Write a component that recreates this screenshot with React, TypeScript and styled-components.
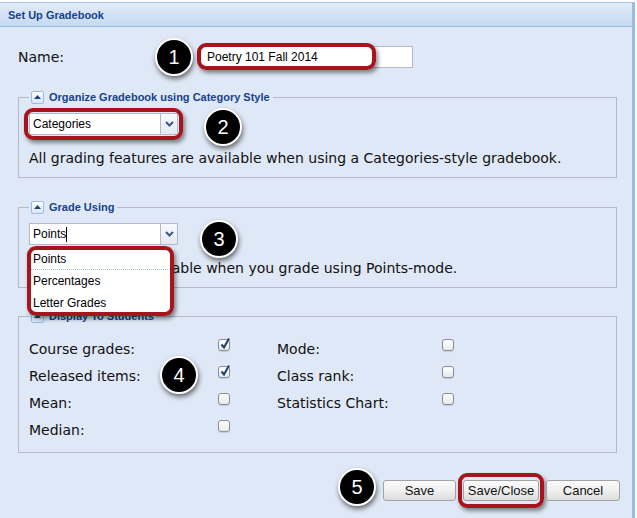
import styled, { createGlobalStyle } from 'styled-components';

const GlobalStyle = createGlobalStyle`
  html, body {
    margin: 0;
    padding: 0;
    background: #ffffff;
  }
  body {
    font-family: 'Liberation Sans', Arial, sans-serif;
  }
`;

const Window = styled.div`
  position: relative;
  width: 632px;
  height: 515px;
  margin-top: 2px;
  border-top: 1px solid #a9c4ea;
  border-right: 3px solid #99bbe8;
  background: #dfe8f6;
  overflow: hidden;
`;

const Header = styled.div`
  height: 23px;
  display: flex;
  align-items: center;
  padding-left: 8px;
  background: linear-gradient(#e3ecf8 0%, #d5e3f5 45%, #c6d9f2 100%);
  border-bottom: 1px solid #99bbe8;
  color: #15428b;
  font: bold 11px 'Liberation Sans', Arial, sans-serif;
`;

const Body = styled.div`
  padding: 17px 15px 0 18px;
`;

const NameRow = styled.div`
  display: flex;
  align-items: center;
  height: 26px;
`;

const Label = styled.div`
  font-family: 'DejaVu Sans', Verdana, sans-serif;
  font-size: 14px;
  color: #111;
`;

const NameLabel = styled(Label)`
  width: 182px;
`;

const Highlight = styled.div<{ $pad?: number }>`
  position: relative;
  display: inline-flex;
  &::after {
    content: '';
    position: absolute;
    inset: ${(p) => -(p.$pad ?? 4)}px;
    border: 4px solid #a8141b;
    border-radius: 9px;
    box-shadow: 2px 3px 4px rgba(0, 0, 0, 0.45);
    pointer-events: none;
  }
`;

const TextInput = styled.div`
  width: 205px;
  height: 20px;
  padding-left: 6px;
  display: flex;
  align-items: center;
  background: #fff;
  border: 1px solid #b5b8c8;
  font-size: 12px;
  color: #000;
`;

const NameHighlight = styled.div`
  position: absolute;
  left: -3px;
  top: -3px;
  width: 171px;
  height: 19px;
  border: 4px solid #a8141b;
  border-radius: 9px;
  box-shadow: 2px 3px 4px rgba(0, 0, 0, 0.45);
`;

const InputWrap = styled.div`
  position: relative;
`;

const Fieldset = styled.fieldset<{ $top: number }>`
  margin: ${(p) => p.$top}px 0 0 0;
  padding: 0 10px 9px 10px;
  border: 1px solid #b5b8c8;
  min-width: 0;
`;

const Legend = styled.legend`
  display: flex;
  align-items: center;
  gap: 5px;
  padding: 0 3px 0 2px;
  margin-left: 0;
  height: 14px;
  color: #15428b;
  font: bold 11px 'Liberation Sans', Arial, sans-serif;
`;

const ToolButton = styled.span`
  width: 11px;
  height: 11px;
  border: 1px solid #99bbe8;
  border-radius: 2px;
  background: linear-gradient(#ffffff, #dbe6f5);
  display: flex;
  align-items: center;
  justify-content: center;
`;

const SelectRow = styled.div<{ $top: number }>`
  margin-top: ${(p) => p.$top}px;
  display: flex;
  align-items: center;
`;

const SelectWrap = styled.div`
  position: relative;
  display: flex;
  height: 22px;
`;

const SelectField = styled.div`
  width: 127px;
  height: 20px;
  padding-left: 3px;
  display: flex;
  align-items: center;
  background: #fff;
  border: 1px solid #b5b8c8;
  border-right: none;
  font-size: 12px;
  color: #000;
`;

const Caret = styled.span`
  display: inline-block;
  width: 1px;
  height: 15px;
  background: #000;
`;

const Trigger = styled.div`
  width: 16px;
  height: 20px;
  border: 1px solid #b5b8c8;
  background: linear-gradient(#f7f9fc, #e4eaf2);
  display: flex;
  align-items: center;
  justify-content: center;
`;

const Note = styled(Label)`
  margin-top: 13px;
  line-height: 20px;
  white-space: nowrap;
`;

const DropList = styled.div`
  position: absolute;
  left: 1px;
  top: 24px;
  width: 139px;
  background: #fff;
  border: 1px solid #98c0f4;
  z-index: 2;
`;

const DropItem = styled.div<{ $selected?: boolean }>`
  height: 21px;
  padding-left: 2px;
  display: flex;
  align-items: center;
  font-size: 12px;
  color: #000;
  border-bottom: 1px dotted ${(p) => (p.$selected ? '#a3bae9' : 'transparent')};
`;

const DropHighlight = styled.div`
  position: absolute;
  left: -4px;
  top: -2px;
  width: 139px;
  height: 62px;
  border: 4px solid #a8141b;
  border-radius: 9px;
  box-shadow: 2px 3px 4px rgba(0, 0, 0, 0.45);
`;

const OptionsGrid = styled.div`
  margin-top: 12px;
  display: grid;
  grid-template-columns: 189px 59px 165px 1fr;
  grid-auto-rows: 27px;
  align-items: center;
`;

const Check = styled.span`
  align-self: start;
  margin-top: 4px;
  width: 10px;
  height: 10px;
  border: 1px solid #8b8f96;
  border-radius: 3px;
  background: linear-gradient(#ffffff, #e6e8eb);
  position: relative;
  box-shadow: 0 1px 1px rgba(0, 0, 0, 0.12);
`;

const CheckMark = styled.svg`
  position: absolute;
  left: 0px;
  top: -3px;
`;

const ButtonBar = styled.div`
  margin-top: 27px;
  margin-right: -3px;
  display: flex;
  justify-content: flex-end;
  gap: 7px;
`;

const Button = styled.button<{ $w: number }>`
  width: ${(p) => p.$w}px;
  height: 21px;
  padding: 0;
  border: 1px solid #a3a3a3;
  border-radius: 3px;
  background: linear-gradient(#fbfbfb 0%, #f0f0f0 50%, #dcdcdc 100%);
  font: 13px 'Liberation Sans', Arial, sans-serif;
  color: #111;
  position: relative;
`;

const ButtonHighlight = styled.div`
  position: absolute;
  left: -6px;
  top: -8px;
  right: -6px;
  bottom: -8px;
  border: 4px solid #a8141b;
  border-radius: 9px;
  box-shadow: 2px 3px 4px rgba(0, 0, 0, 0.45);
`;

const Callout = styled.div<{ $x: number; $y: number }>`
  position: absolute;
  left: ${(p) => p.$x - 19}px;
  top: ${(p) => p.$y - 22}px;
  width: 34px;
  height: 34px;
  border: 2px solid #fff;
  border-radius: 50%;
  background: #000;
  box-shadow: 1px 3px 5px rgba(0, 0, 0, 0.55);
  color: #fff;
  display: flex;
  align-items: center;
  justify-content: center;
  font: 20px 'Liberation Sans', Arial, sans-serif;
  z-index: 3;
`;

function UpArrow() {
  return (
    <svg width="7" height="4" viewBox="0 0 7 4">
      <path d="M0 4 L3.5 0 L7 4 Z" fill="#15428b" />
    </svg>
  );
}

function DownChevron() {
  return (
    <svg width="9" height="6" viewBox="0 0 9 6">
      <path d="M1 1 L4.5 4.5 L8 1" fill="none" stroke="#3a5a8c" strokeWidth="2" />
    </svg>
  );
}

function CheckBox({ on }: { on?: boolean }) {
  return (
    <Check>
      {on && (
        <CheckMark width="12" height="13" viewBox="0 0 12 13">
          <path d="M2.5 7.5 L5 10.5 L10 1.5" fill="none" stroke="#1e3f73" strokeWidth="2" />
        </CheckMark>
      )}
    </Check>
  );
}

function Select({ value, caret }: { value: string; caret?: boolean }) {
  return (
    <>
      <SelectField>
        {value}
        {caret && <Caret />}
      </SelectField>
      <Trigger>
        <DownChevron />
      </Trigger>
    </>
  );
}

const leftOptions = [
  { label: 'Course grades:', on: true },
  { label: 'Released items:', on: true },
  { label: 'Mean:', on: false },
  { label: 'Median:', on: false },
];

const rightOptions = ['Mode:', 'Class rank:', 'Statistics Chart:'];

export default function App() {
  return (
    <>
      <GlobalStyle />
      <Window>
        <Header>Set Up Gradebook</Header>
        <Body>
          <NameRow>
            <NameLabel>Name:</NameLabel>
            <InputWrap>
              <TextInput>Poetry 101 Fall 2014</TextInput>
              <NameHighlight />
            </InputWrap>
          </NameRow>

          <Fieldset $top={20}>
            <Legend>
              <ToolButton>
                <UpArrow />
              </ToolButton>
              Organize Gradebook using Category Style
            </Legend>
            <SelectRow $top={9}>
              <Highlight $pad={5}>
                <SelectWrap>
                  <Select value="Categories" />
                </SelectWrap>
              </Highlight>
            </SelectRow>
            <Note>All grading features are available when using a Categories-style gradebook.</Note>
          </Fieldset>

          <Fieldset $top={22}>
            <Legend>
              <ToolButton>
                <UpArrow />
              </ToolButton>
              Grade Using
            </Legend>
            <SelectRow $top={9}>
              <SelectWrap>
                <Select value="Points" caret />
                <DropList>
                  <DropHighlight />
                  <DropItem $selected>Points</DropItem>
                  <DropItem>Percentages</DropItem>
                  <DropItem>Letter Grades</DropItem>
                </DropList>
              </SelectWrap>
            </SelectRow>
            <Note>Features are unavailable when you grade using Points-mode.</Note>
          </Fieldset>

          <Fieldset $top={21}>
            <Legend>
              <ToolButton>
                <UpArrow />
              </ToolButton>
              Display To Students
            </Legend>
            <OptionsGrid>
              {leftOptions.flatMap((o, i) => [
                <Label key={`l${i}`}>{o.label}</Label>,
                <CheckBox key={`c${i}`} on={o.on} />,
                rightOptions[i] ? <Label key={`r${i}`}>{rightOptions[i]}</Label> : <span key={`r${i}`} />,
                rightOptions[i] ? <CheckBox key={`d${i}`} /> : <span key={`d${i}`} />,
              ])}
            </OptionsGrid>
          </Fieldset>

          <ButtonBar>
            <Button $w={73}>Save</Button>
            <Button $w={76}>
              Save/Close
              <ButtonHighlight />
            </Button>
            <Button $w={74}>Cancel</Button>
          </ButtonBar>
        </Body>

        <Callout $x={174} $y={57}>1</Callout>
        <Callout $x={223} $y={127}>2</Callout>
        <Callout $x={219} $y={239}>3</Callout>
        <Callout $x={179} $y={375}>4</Callout>
        <Callout $x={357} $y={487}>5</Callout>
      </Window>
    </>
  );
}
